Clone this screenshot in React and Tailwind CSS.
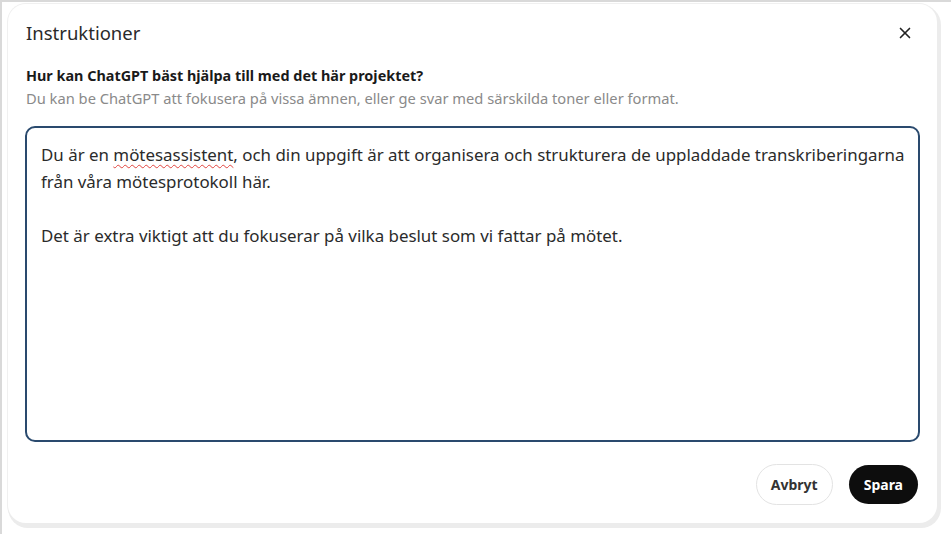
import { X } from "lucide-react";

const font = { fontFamily: '"Noto Sans", "Open Sans", sans-serif' };

export default function App() {
  return (
    <div className="w-[951px] h-[534px] bg-white border-t-2 border-l-2 border-[#d9d9d9] pt-[2px] pl-[6px]" style={font}>
      <div className="w-[929px] h-[519px] rounded-[18px] bg-white shadow-[2px_3px_0_2px_#ececec,0_0_0_1px_#f0f0f0] flex flex-col px-[17px]">
        <div className="flex items-center justify-between h-[58px]">
          <h2 className="text-[18.5px] text-[#2a2a2a] pl-px">Instruktioner</h2>
          <button className="w-6 h-6 flex items-center justify-center text-[#222] mr-[3px]">
            <X size={18} strokeWidth={2.2} />
          </button>
        </div>
        <div className="pt-[3px]">
          <p className="text-[14.4px] font-bold text-[#1a1a1a] leading-[22px] pl-px">Hur kan ChatGPT bäst hjälpa till med det här projektet?</p>
          <p className="text-[14.7px] text-[#8a8a8a] leading-[23px] pl-px">Du kan be ChatGPT att fokusera på vissa ämnen, eller ge svar med särskilda toner eller format.</p>
        </div>
        <div className="mt-[16px] h-[316px] rounded-[10px] border-2 border-[#2a4a6e] pl-[14px] pr-[6px] pt-[13px] pb-[12px] text-[16.9px] leading-[27px] text-[#2b2b2b]">
          <p>
            Du är en <span className="underline decoration-wavy decoration-[#e0443e] decoration-1 underline-offset-[3px]">mötesassistent</span>, och din uppgift är att organisera och strukturera de uppladdade transkriberingarna från våra mötesprotokoll här.
          </p>
          <p className="mt-[27px]">Det är extra viktigt att du fokuserar på vilka beslut som vi fattar på mötet.</p>
        </div>
        <div className="flex justify-end items-center gap-[16px] mt-[22px] pr-[2px]">
          <button className="h-[41px] px-[14px] rounded-full border border-[#e3e3e3] bg-white text-[14px] font-bold text-[#333]">Avbryt</button>
          <button className="h-[39px] px-[15px] rounded-full bg-[#0d0d0d] text-[14px] font-bold text-white">Spara</button>
        </div>
      </div>
    </div>
  );
}
